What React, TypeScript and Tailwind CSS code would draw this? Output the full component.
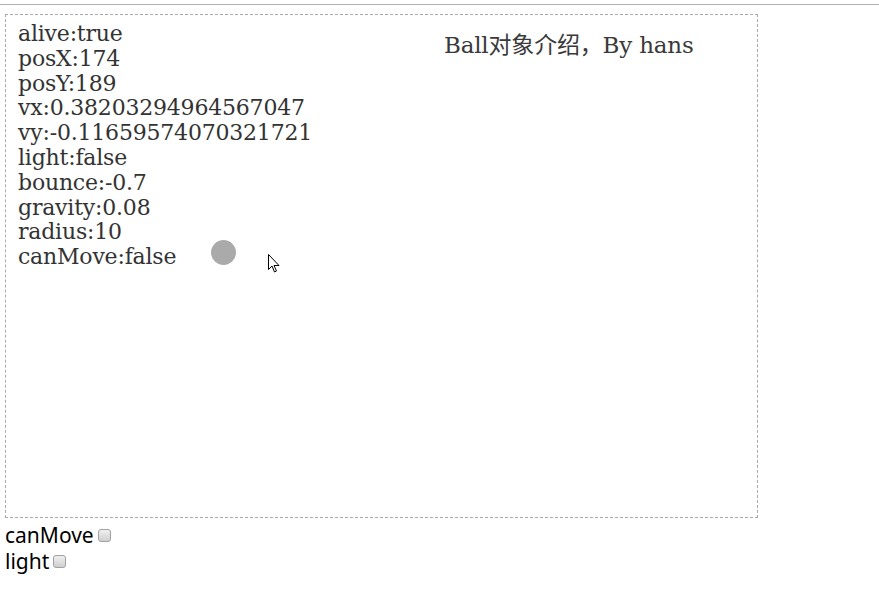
import React from "react";

const props: [string, string][] = [
  ["alive", "true"],
  ["posX", "174"],
  ["posY", "189"],
  ["vx", "0.38203294964567047"],
  ["vy", "-0.11659574070321721"],
  ["light", "false"],
  ["bounce", "-0.7"],
  ["gravity", "0.08"],
  ["radius", "10"],
  ["canMove", "false"],
];

function Check({ label }: { label: string }) {
  return (
    <label className="flex items-center h-[26px]">
      <span>{label}</span>
      <input
        type="checkbox"
        className="appearance-none ml-[4px] mt-[-2px] w-[13px] h-[13px] rounded-[3px] border border-[#a0a0a0] bg-gradient-to-b from-[#f0f0f0] to-[#cfcfcf]"
      />
    </label>
  );
}

export default function App() {
  return (
    <div className="w-[879px] h-[592px] bg-white text-[#333]">
      <div className="pt-[4px]">
        <div className="h-px bg-[#b0b0b0]" />
      </div>
      <div className="ml-[5px] mt-[9px] relative w-[753px] h-[504px] border border-dashed border-[#aaa] px-[12px] pt-[7px] font-['DejaVu_Serif',serif] text-[22px] leading-[24.8px] tracking-[-0.2px]">
        {props.map(([k, v]) => (
          <div key={k}>
            {k}:{v}
          </div>
        ))}
        <div className="absolute left-[438px] top-[13px] text-[23px] leading-[30px] text-[#3a3a3a] font-['DejaVu_Serif','Noto_Sans_CJK_SC',serif]">
          Ball
          <span className="font-['Noto_Sans_CJK_SC',sans-serif] text-[23px]">对象介绍，</span>
          By hans
        </div>
        <div className="absolute left-[205px] top-[225px] w-[25px] h-[25px] rounded-full bg-[#aaaaaa]" />
        <svg
          className="absolute left-[262px] top-[239px]"
          width="12"
          height="20"
          viewBox="0 0 12 20"
        >
          <path
            d="M0.5 0.5 L0.5 15.5 L4 12 L6.5 18 L8.5 17 L6 11.5 L11 11.5 Z"
            fill="#fff"
            stroke="#000"
            strokeWidth="1"
            strokeLinejoin="miter"
          />
        </svg>
      </div>
      <div className="mt-[5px] pl-[5px] font-['Noto_Sans',sans-serif] text-[21px] text-black">
        <Check label="canMove" />
        <Check label="light" />
      </div>
    </div>
  );
}
